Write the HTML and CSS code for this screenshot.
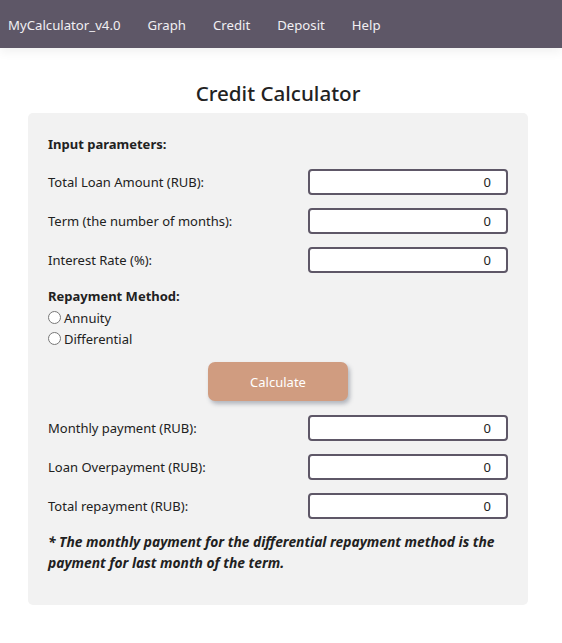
FILE: index.html
```html
<!DOCTYPE html>
<html>
<head>
<meta charset="utf-8">
<title>Credit Calculator</title>
<link rel="stylesheet" href="styles.css">
</head>
<body>
<nav class="nav">
  <a class="nav-link">MyCalculator_v4.0</a>
  <a class="nav-link">Graph</a>
  <a class="nav-link">Credit</a>
  <a class="nav-link">Deposit</a>
  <a class="nav-link">Help</a>
</nav>
<main class="page">
  <h1 class="title">Credit Calculator</h1>
  <section class="card">
    <div class="section-head">Input parameters:</div>
    <div class="rows first">
      <label class="row"><span>Total Loan Amount (RUB):</span><input class="field" value="0"></label>
      <label class="row"><span>Term (the number of months):</span><input class="field" value="0"></label>
      <label class="row"><span>Interest Rate (%):</span><input class="field" value="0"></label>
    </div>
    <div class="section-head method">Repayment Method:</div>
    <label class="radio"><input type="radio" name="m"><span>Annuity</span></label>
    <label class="radio"><input type="radio" name="m"><span>Differential</span></label>
    <div class="btn-wrap"><button class="btn">Calculate</button></div>
    <div class="rows">
      <label class="row"><span>Monthly payment (RUB):</span><input class="field" value="0"></label>
      <label class="row"><span>Loan Overpayment (RUB):</span><input class="field" value="0"></label>
      <label class="row"><span>Total repayment (RUB):</span><input class="field" value="0"></label>
    </div>
    <p class="note">* The monthly payment for the differential repayment method is the payment for last month of the term.</p>
  </section>
</main>
</body>
</html>
```
FILE: styles.css
```css
* { box-sizing: border-box; }
body {
  margin: 0;
  font-family: "Noto Sans", "Open Sans", sans-serif;
  color: #212121;
  background: #fff;
}
.nav {
  height: 48px;
  background: #5e5767;
  display: flex;
  align-items: center;
  gap: 27px;
  padding: 2px 0 0 8px;
  box-shadow: 0 4px 10px rgba(0,0,0,0.06);
}
.nav-link {
  color: #f1eff3;
  font-size: 13.2px;
  line-height: 20px;
}
.page {
  padding: 0 0 0 28px;
}
.title {
  width: 500px;
  margin: 28px 0 0;
  text-align: center;
  font-size: 20.6px;
  font-weight: 500;
  line-height: 34px;
  color: #222;
}
.card {
  width: 500px;
  margin-top: 3px;
  background: #f2f2f2;
  border-radius: 5px;
  padding: 20px 20px 32px;
  font-size: 13px;
}
.section-head {
  font-weight: 700;
  line-height: 22px;
}
.rows {
  display: flex;
  flex-direction: column;
  gap: 13px;
  margin-top: 14px;
}
.row {
  display: flex;
  align-items: center;
  justify-content: space-between;
  height: 26px;
}
.field {
  width: 200px;
  height: 26px;
  border: 2px solid #5e5767;
  border-radius: 4px;
  background: #fff;
  text-align: right;
  padding: 0 15px 0 4px;
  font-family: inherit;
  font-size: 13px;
  color: #222;
}
.method { margin-top: 12px; }
.radio {
  display: flex;
  align-items: center;
  height: 21px;
  gap: 3px;
}
.radio input {
  margin: 0;
  width: 13px;
  height: 13px;
}
.btn-wrap {
  display: flex;
  justify-content: center;
  margin-top: 13px;
}
.btn {
  width: 140px;
  height: 39px;
  border: none;
  border-radius: 7px;
  background: #d09c80;
  color: #fff;
  font-family: inherit;
  font-size: 13px;
  box-shadow: 2px 3px 4px rgba(60,70,90,0.35);
}
.note {
  margin: 12px 0 0;
  font-weight: 700;
  font-style: italic;
  font-size: 13.8px;
  line-height: 21px;
}
```
